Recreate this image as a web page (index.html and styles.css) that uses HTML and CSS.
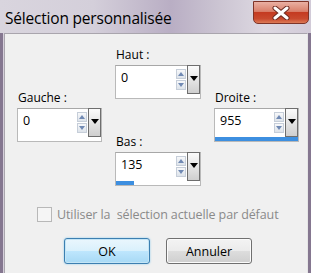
FILE: index.html
```html
<!DOCTYPE html>
<html lang="fr">
<head>
    <meta charset="utf-8"/>
    <title>Sélection personnalisée</title>
    <link rel="stylesheet" href="styles.css">
</head>
<body>
<div class="window">
    <div class="titlebar">
        <span class="title">Sélection personnalisée</span>
        <span class="close">
            <svg width="20" height="14" viewBox="0 0 20 14">
                <path d="M4 2 L16 12 M16 2 L4 12" stroke="#6b2a20" stroke-width="5" stroke-linecap="round"/>
                <path d="M4 2 L16 12 M16 2 L4 12" stroke="#fff" stroke-width="3" stroke-linecap="round"/>
            </svg>
        </span>
    </div>
    <div class="client">
        <div class="fields">
            <div class="col col-side">
                <div class="label">Gauche :</div>
                <div class="spin">
                    <div class="row"><span class="value">0</span><span class="arrows"><span class="arr up"></span><span class="arr down"></span></span><span class="drop"></span></div>
                </div>
            </div>
            <div class="col col-mid">
                <div class="label">Haut :</div>
                <div class="spin">
                    <div class="row"><span class="value">0</span><span class="arrows"><span class="arr up"></span><span class="arr down"></span></span><span class="drop"></span></div>
                </div>
                <div class="label label-bas">Bas :</div>
                <div class="spin">
                    <div class="row"><span class="value">135</span><span class="arrows"><span class="arr up"></span><span class="arr down"></span></span><span class="drop"></span></div>
                    <div class="bar" style="width:22%"></div>
                </div>
            </div>
            <div class="col col-side">
                <div class="label">Droite :</div>
                <div class="spin">
                    <div class="row"><span class="value">955</span><span class="arrows"><span class="arr up"></span><span class="arr down"></span></span><span class="drop"></span></div>
                    <div class="bar" style="width:100%"></div>
                </div>
            </div>
        </div>
        <div class="check"><span class="box"></span><span>Utiliser la&nbsp; sélection actuelle par défaut</span></div>
        <div class="buttons">
            <span class="btn btn-default">OK</span>
            <span class="btn">Annuler</span>
        </div>
    </div>
</div>
</body>
</html>
```

FILE: styles.css
```css
* {
    margin: 0;
    padding: 0;
    box-sizing: border-box;
}
body {
    width: 311px;
    height: 273px;
    overflow: hidden;
    font-family: "Open Sans", "Noto Sans", sans-serif;
    font-size: 12px;
    color: #000;
}
.window {
    width: 311px;
    height: 273px;
    display: flex;
    flex-direction: column;
    background: linear-gradient(90deg, #857790 0, #857790 3px, transparent 3px, transparent 308px, #857790 308px);
    background-color: #d6d0db;
}
.titlebar {
    height: 33px;
    flex: none;
    display: flex;
    align-items: flex-start;
    justify-content: space-between;
    background: linear-gradient(90deg, #d9d5de 0%, #d4cfda 30%, #b9aec4 55%, #cbc4d2 70%, #ddd8e1 85%, #d2cbd8 100%);
}
.title {
    font-size: 15.5px;
    letter-spacing: -0.2px;
    padding: 7px 0 0 5px;
    color: #000;
}
.close {
    margin: 1px 2px 0 0;
    width: 56px;
    height: 23px;
    border: 1px solid #7e3428;
    border-radius: 0 0 5px 5px;
    background: linear-gradient(#eab0a3 0%, #d9806b 45%, #c43b21 50%, #c94a2e 80%, #dd7a56 100%);
    display: flex;
    align-items: center;
    justify-content: center;
}
.client {
    flex: 1;
    margin: 0 3px 0 4px;
    background: #f0f0f0;
    border-top: 1px solid #a9a5ad;
    border-left: 1px solid #a9a5ad;
    border-right: 1px solid #e6e6e6;
    padding: 0 0 0 12px;
}
.fields {
    display: flex;
    gap: 13px;
}
.col {
    display: flex;
    flex-direction: column;
    width: 85px;
}
.col-side {
    padding-top: 57px;
}
.col-mid {
    padding-top: 14px;
    width: 86px;
}
.label {
    height: 17px;
    line-height: 13px;
    padding-left: 1px;
}
.label-bas {
    margin-top: 36px;
}
.spin {
    width: 100%;
    height: 34px;
    background: #fff;
    border: 1px solid #b9b9b9;
    border-top-color: #a7a7a7;
    display: flex;
    flex-direction: column;
}
.row {
    display: flex;
    height: 29px;
}
.value {
    flex: 1;
    padding: 3px 0 0 5px;
    font-size: 12.5px;
}
.arrows {
    width: 11px;
    padding-top: 3px;
    display: flex;
    flex-direction: column;
    gap: 1px;
}
.arr {
    width: 10px;
    height: 10px;
    border: 1px solid #c6ced9;
    background: linear-gradient(#f7f8fa, #dde3ea);
    display: flex;
    align-items: center;
    justify-content: center;
}
.arr::after {
    content: "";
    border-left: 3px solid transparent;
    border-right: 3px solid transparent;
}
.up::after {
    border-bottom: 4px solid #7089b3;
}
.down::after {
    border-top: 4px solid #7089b3;
}
.drop {
    width: 13px;
    height: 29px;
    margin-top: -1px;
    border: 1px solid #6e6e6e;
    background: linear-gradient(#fbfbfb, #cfcfcf);
    display: flex;
    justify-content: center;
    padding-top: 10px;
}
.drop::after {
    content: "";
    width: 0;
    height: 0;
    border-left: 4px solid transparent;
    border-right: 4px solid transparent;
    border-top: 5px solid #000;
}
.bar {
    height: 4px;
    margin-top: auto;
    background: #3d8fe0;
}
.check {
    display: flex;
    align-items: center;
    gap: 5px;
    margin: 20px 0 0 20px;
    color: #8a8a8a;
    font-size: 12.5px;
    letter-spacing: -0.1px;
}
.box {
    width: 15px;
    height: 15px;
    border: 1px solid #b8b8b8;
    background: #f5f5f5;
}
.buttons {
    display: flex;
    gap: 16px;
    margin: 15px 0 0 47px;
}
.btn {
    width: 86px;
    height: 26px;
    border: 1px solid #707070;
    border-radius: 3px;
    background: linear-gradient(#f3f3f3 0%, #ebebeb 50%, #dddddd 51%, #cfcfcf 100%);
    display: flex;
    align-items: center;
    justify-content: center;
    font-size: 12.5px;
    box-shadow: inset 0 0 0 1px #fbfbfb;
}
.btn-default {
    border-color: #3c7fb1;
    background: linear-gradient(#eaf6fd 0%, #d9f0fc 50%, #bee6fd 51%, #a7d9f5 100%);
    box-shadow: inset 0 0 0 1px #c4e5f6, 0 0 2px #7fc4ec;
}
```
